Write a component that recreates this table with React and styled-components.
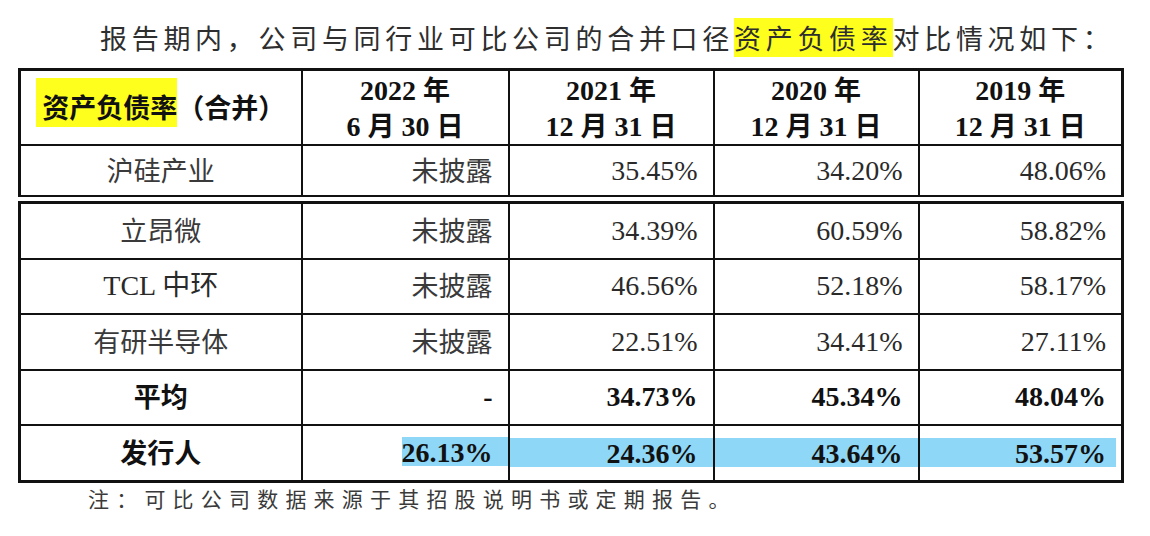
import React from 'react';
import styled, { createGlobalStyle } from 'styled-components';

const GlobalStyle = createGlobalStyle`
  html, body {
    margin: 0;
    padding: 0;
    background: #ffffff;
  }
`;

const Page = styled.div`
  width: 1150px;
  height: 536px;
  overflow: hidden;
  background: #ffffff;
  font-family: "Liberation Serif", "Noto Sans CJK SC", serif;
  color: #1a1a1a;
`;

const Lead = styled.p`
  margin: 0;
  padding: 20px 0 0 100px;
  font-family: "Noto Sans CJK SC", sans-serif;
  font-size: 27px;
  line-height: 36px;
  letter-spacing: 4.7px;
  color: #2e2e2e;
  white-space: nowrap;
`;

const Mark = styled.span`
  background: #ffff1e;
`;

const Sheet = styled.table`
  width: 1103px;
  margin: ${p => p.$top}px 0 0 18px;
  table-layout: fixed;
  border-collapse: collapse;
  border: 3px solid #111;
  ${p => p.$open && 'border-bottom: none;'}
`;

const Cell = styled.td`
  height: ${p => p.$h}px;
  padding: 0 ${p => (p.$align === 'right' ? 15 : 0)}px 0 0;
  border: 2px solid #111;
  text-align: ${p => p.$align || 'center'};
  vertical-align: middle;
  font-size: 28px;
  line-height: 34px;
  font-weight: ${p => (p.$bold ? 700 : 400)};
  color: ${p => (p.$bold ? '#111' : '#2a2a2a')};
  white-space: nowrap;
`;

const Head = styled(Cell).attrs({ as: 'th' })`
  font-weight: 700;
  color: #111;
`;

const Zh = styled.span`
  font-family: "Noto Sans CJK SC", sans-serif;
  font-size: 27px;
  font-weight: ${p => (p.$bold ? 700 : 400)};
  color: ${p => (p.$bold ? '#111' : '#3a3a3a')};
`;

const HeadMark = styled.span`
  background: #ffff1e;
  padding: 9px 0 1px 6px;
`;

const SelCell = styled.td`
  height: ${p => p.$h}px;
  padding: 0 ${p => (p.$part === 'end' ? 5 : 0)}px 0 0;
  border: 2px solid #111;
  text-align: right;
  vertical-align: middle;
  font-size: 28px;
  font-weight: 700;
  color: #111;
  white-space: nowrap;
`;

const Sel = styled.span`
  display: ${p => (p.$part === 'start' ? 'inline-block' : 'block')};
  height: 29px;
  line-height: 31px;
  padding-right: ${p => (p.$part === 'end' ? 10 : 15)}px;
  background: #8fd7f6;
`;

const Note = styled.p`
  margin: 0 0 0 88px;
  font-family: "Noto Sans CJK SC", sans-serif;
  font-size: 21px;
  line-height: 30px;
  letter-spacing: 7.2px;
  color: #3a3a3a;
  white-space: nowrap;
`;

const cols = [282, 207, 205, 205, 204];

const Cols = () => (
  <colgroup>
    {cols.map((w, i) => (
      <col key={i} style={{ width: w }} />
    ))}
  </colgroup>
);

const heads = [
  ['2022', '6', '30'],
  ['2021', '12', '31'],
  ['2020', '12', '31'],
  ['2019', '12', '31'],
];

const peers = [
  ['立昂微', ['未披露', '34.39%', '60.59%', '58.82%']],
  [<>TCL 中环</>, ['未披露', '46.56%', '52.18%', '58.17%']],
  ['有研半导体', ['未披露', '22.51%', '34.41%', '27.11%']],
];

const issuer = ['26.13%', '24.36%', '43.64%', '53.57%'];

const ROW = 53.5;

const Value = ({ v }) => (/%|-/.test(v) ? v : <Zh>{v}</Zh>);

const partOf = i => (i === 0 ? 'start' : i === issuer.length - 1 ? 'end' : 'mid');

export default function App() {
  return (
    <Page>
      <GlobalStyle />
      <Lead>
        报告期内，公司与同行业可比公司的合并口径<Mark>资产负债率</Mark>对比情况如下：
      </Lead>

      <Sheet $top={12} $open>
        <Cols />
        <thead>
          <tr>
            <Head $h={73}>
              <Zh $bold>
                <HeadMark>资产负债率</HeadMark>（合并）
              </Zh>
            </Head>
            {heads.map(([y, m, d]) => (
              <Head key={y} $h={73}>
                {y} <Zh $bold>年</Zh>
                <br />
                {m} <Zh $bold>月</Zh> {d} <Zh $bold>日</Zh>
              </Head>
            ))}
          </tr>
        </thead>
        <tbody>
          <tr>
            <Cell $h={49}>
              <Zh>沪硅产业</Zh>
            </Cell>
            <Cell $h={49} $align="right">
              <Zh>未披露</Zh>
            </Cell>
            <Cell $h={49} $align="right">35.45%</Cell>
            <Cell $h={49} $align="right">34.20%</Cell>
            <Cell $h={49} $align="right">48.06%</Cell>
          </tr>
        </tbody>
      </Sheet>

      <Sheet $top={4}>
        <Cols />
        <tbody>
          {peers.map(([name, vals], r) => (
            <tr key={r}>
              <Cell $h={ROW}>{typeof name === 'string' ? <Zh>{name}</Zh> : name}</Cell>
              {vals.map((v, i) => (
                <Cell key={i} $h={ROW} $align="right">
                  <Value v={v} />
                </Cell>
              ))}
            </tr>
          ))}
          <tr>
            <Cell $h={ROW} $bold>
              <Zh $bold>平均</Zh>
            </Cell>
            <Cell $h={ROW} $align="right" $bold>-</Cell>
            <Cell $h={ROW} $align="right" $bold>34.73%</Cell>
            <Cell $h={ROW} $align="right" $bold>45.34%</Cell>
            <Cell $h={ROW} $align="right" $bold>48.04%</Cell>
          </tr>
          <tr>
            <Cell $h={ROW} $bold>
              <Zh $bold>发行人</Zh>
            </Cell>
            {issuer.map((v, i) => (
              <SelCell key={v} $h={ROW} $part={partOf(i)}>
                <Sel $part={partOf(i)}>{v}</Sel>
              </SelCell>
            ))}
          </tr>
        </tbody>
      </Sheet>

      <Note>注：可比公司数据来源于其招股说明书或定期报告。</Note>
    </Page>
  );
}
